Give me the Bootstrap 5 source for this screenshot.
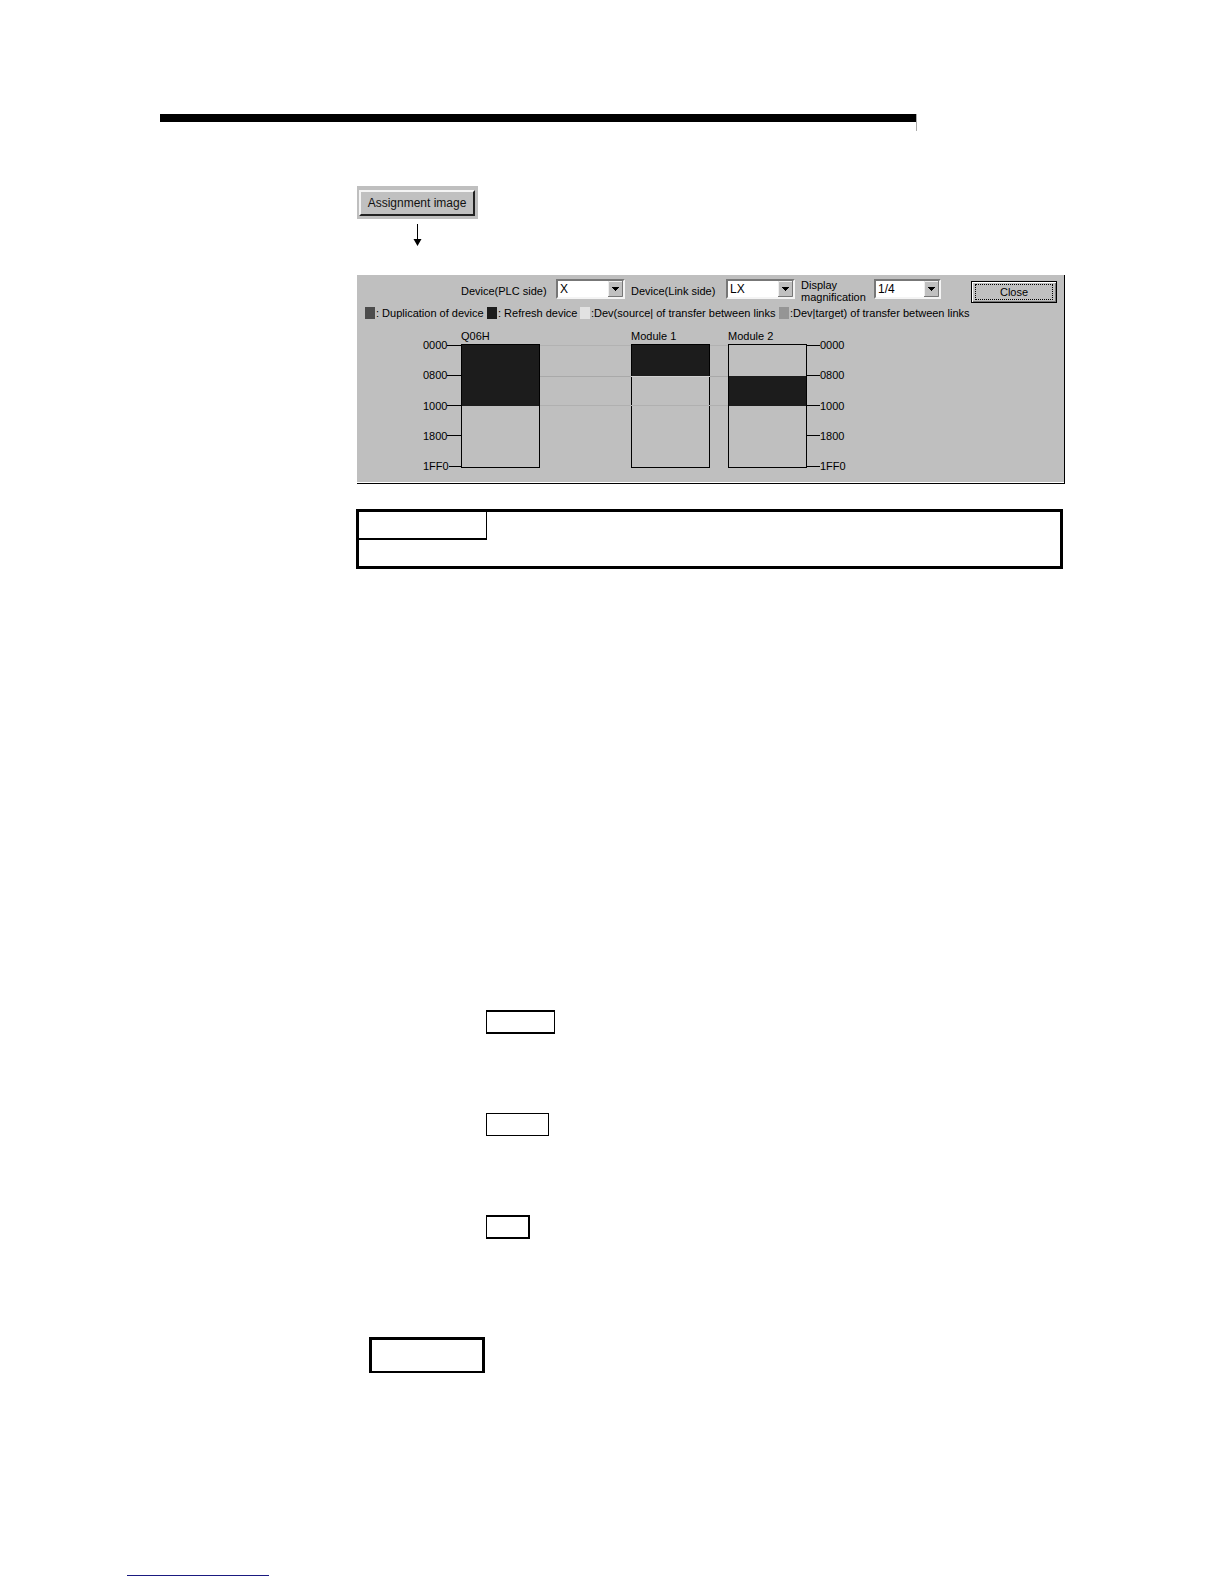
<!DOCTYPE html>
<html lang="en">
<head>
<meta charset="utf-8">
<meta name="viewport" content="width=device-width, initial-scale=1">
<title>Assignment image</title>
<link href="https://cdn.jsdelivr.net/npm/bootstrap@5.3.0/dist/css/bootstrap.min.css" rel="stylesheet">
<style>
  body { font: 11px/12px "Liberation Sans", Arial, sans-serif; color: #000; background: #fff; }
  .page-head { margin: 0 307px 55px 160px; padding-top: 114px; }
  .head-rule { height: 17px; border-right: 1px solid #aaa; }
  .head-rule div { height: 8px; background: #000; }
  .sheet { padding: 0 159px 0 357px; }

  .btn-plate { background: #bfbfbf; padding: 4px 3px 3px 2px; width: 121px; }
  .classic-btn { display: block; width: 100%; padding: 0; border-radius: 0; background: #c0c0c0; color: #111;
    border: 2px solid; border-color: #f4f4f4 #222 #222 #f4f4f4; font-size: 12px; line-height: 22px; text-align: center; }
  .arrow-row { width: 121px; height: 56px; padding-top: 5px; }

  .dialog-pane { background: #bfbfbf; border-right: 1px solid #000; border-bottom: 1px solid #000; box-shadow: inset 0 -1px #fff; height: 209px; }
  .tools { padding: 4px 7px 0 104px; height: 32px; }
  .tools label { width: 95px; padding-top: 6px; white-space: nowrap; }
  .tools .two-line { width: 73px; padding-top: 0; }
  .pick { width: 69px; height: 20px; margin-right: 6px; }
  .pick-s { width: 67px; }
  .pick select { appearance: none; width: 100%; height: 20px; padding: 0 0 0 2px; border: 2px solid; border-color: #777 #f4f4f4 #f4f4f4 #777;
    border-radius: 0; background: #fff; color: #000; font-size: 12px; line-height: 16px; }
  .pick svg { top: 2px; right: 2px; pointer-events: none; }
  .close-btn { width: 86px; height: 22px; margin-top: 2px; padding: 2px; border: 1px solid #000; border-radius: 0; background: #c0c0c0;
    box-shadow: inset 1px 1px #fff, inset -1px -1px #777; color: #000; font-size: 11px; line-height: 14px; }
  .close-btn span { display: block; border: 1px dotted #000; margin: 0 1px; }

  .legend-row { padding: 0 8px; height: 12px; white-space: nowrap; }
  .swatch { width: 10px; height: 12px; margin-right: 1px; flex: none; }
  .c-dup { background: #4c4c4c; } .c-ref { background: #1c1c1c; } .c-src { background: #e2e2e2; } .c-tgt { background: #959595; }
  .w-a { width: 122px; } .w-b { width: 93px; } .w-c { width: 199px; }

  .plot { padding: 12px 0 0 66px; }
  .scale { margin: 8px 0 0; width: 38px; height: 133px; padding: 0; list-style: none; }
  .scale li { height: 12px; }
  .scale li::after { content: ""; flex: 1; height: 1px; background: #000; }
  .scale.end li { flex-direction: row-reverse; justify-content: flex-end; }
  .scale.end li::after { flex: 0 0 13px; }
  .unit { width: 79px; }
  .unit h2 { font-size: 11px; line-height: 12px; margin: -1px 0 2px; font-weight: 400; white-space: nowrap; }
  .mem { height: 124px; border: 1px solid #000; }
  .fill { background: #1c1c1c; }
  .h-one { height: 31px; } .h-two { height: 61px; } .h-low { height: 30px; }
  .mem .cut { height: 30px; margin: 0 -1px; border-top: 1px solid #d0d0d0; border-bottom: 1px solid #b0b0b0; }
  .guides { padding-top: 14px; }
  .guides div { border-top: 1px solid #b2b2b2; height: 31px; }
  .guides .strong { border-top: 1px solid #a9a9a9; border-bottom: 1px solid #b0b0b0; height: 30px; }
  .g-wide { width: 91px; } .g-slim { width: 18px; }

  .note-box { margin: 25px 2px 0 -1px; border: 3px solid #000; height: 60px; }
  .note-tab { width: 128px; height: 28px; border-right: 1px solid #000; border-bottom: 2px solid #000; }
  .keys { margin: 441px 0 0 129px; gap: 79px; }
  .key { border: 1px solid #000; height: 24px; }
  .key-a { width: 69px; border-width: 2px 1px; }
  .key-b { width: 63px; height: 23px; }
  .key-c { width: 44px; border-width: 2px 2px 2px 1px; }
  .remark { margin: 98px 0 0 12px; width: 116px; height: 36px; border: 3px solid #000; border-bottom-width: 2px; }
  .page-foot { margin: 190px 0 0 127px; }
  .page-foot a { display: block; width: 142px; height: 13px; border-bottom: 1px solid #1a1a80; }
</style>
<script src="https://cdn.jsdelivr.net/npm/bootstrap@5.3.0/dist/js/bootstrap.bundle.min.js"></script>
</head>
<body>
<header class="page-head"><div class="head-rule"><div></div></div></header>

<main class="sheet">
  <div class="btn-plate"><button type="button" class="classic-btn">Assignment image</button></div>
  <div class="arrow-row d-flex justify-content-center">
    <svg width="9" height="22" viewBox="0 0 9 22" aria-hidden="true"><path d="M4 0h1v15h3.500L4.500 22 .500 15H4z"/></svg>
  </div>

  <section class="dialog-pane">
    <form class="tools d-flex align-items-start">
      <label for="plc">Device(PLC side)</label>
      <div class="pick position-relative">
        <select id="plc"><option>X</option></select>
        <svg class="position-absolute" width="15" height="16" viewBox="0 0 15 16"><path fill="#c0c0c0" d="M0 0h15v16H0z"/><path fill="none" stroke="#777" d="M0 15.500h14.500V0"/><path fill="none" stroke="#eee" d="M.500 15V.500H14"/><path d="M4 6h7v1h-1v1H9v1H8v1H7V9H6V8H5V7H4z"/></svg>
      </div>
      <label for="lnk">Device(Link side)</label>
      <div class="pick position-relative">
        <select id="lnk"><option>LX</option></select>
        <svg class="position-absolute" width="15" height="16" viewBox="0 0 15 16"><path fill="#c0c0c0" d="M0 0h15v16H0z"/><path fill="none" stroke="#777" d="M0 15.500h14.500V0"/><path fill="none" stroke="#eee" d="M.500 15V.500H14"/><path d="M4 6h7v1h-1v1H9v1H8v1H7V9H6V8H5V7H4z"/></svg>
      </div>
      <label class="two-line" for="mag">Display<br>magnification</label>
      <div class="pick pick-s position-relative">
        <select id="mag"><option>1/4</option></select>
        <svg class="position-absolute" width="15" height="16" viewBox="0 0 15 16"><path fill="#c0c0c0" d="M0 0h15v16H0z"/><path fill="none" stroke="#777" d="M0 15.500h14.500V0"/><path fill="none" stroke="#eee" d="M.500 15V.500H14"/><path d="M4 6h7v1h-1v1H9v1H8v1H7V9H6V8H5V7H4z"/></svg>
      </div>
      <button type="button" class="close-btn ms-auto"><span>Close</span></button>
    </form>

    <div class="legend-row d-flex">
      <div class="w-a d-flex"><i class="swatch c-dup"></i>: Duplication of device</div>
      <div class="w-b d-flex"><i class="swatch c-ref"></i>: Refresh device</div>
      <div class="w-c d-flex"><i class="swatch c-src"></i>:Dev(source| of transfer between links</div>
      <div class="d-flex"><i class="swatch c-tgt"></i>:Dev|target) of transfer between links</div>
    </div>

    <div class="plot d-flex">
      <ul class="scale d-flex flex-column justify-content-between">
        <li class="d-flex align-items-center">0000</li><li class="d-flex align-items-center">0800</li><li class="d-flex align-items-center">1000</li><li class="d-flex align-items-center">1800</li><li class="d-flex align-items-center">1FF0</li>
      </ul>
      <div class="unit"><h2>Q06H</h2><div class="mem"><div class="fill h-two"></div></div></div>
      <div class="guides g-wide"><div></div><div class="strong"></div></div>
      <div class="unit"><h2>Module 1</h2><div class="mem"><div class="fill h-one"></div><div class="cut"></div></div></div>
      <div class="guides g-slim"><div></div><div class="strong"></div></div>
      <div class="unit"><h2>Module 2</h2><div class="mem"><div class="h-one"></div><div class="fill h-low"></div></div></div>
      <ul class="scale end d-flex flex-column justify-content-between">
        <li class="d-flex align-items-center">0000</li><li class="d-flex align-items-center">0800</li><li class="d-flex align-items-center">1000</li><li class="d-flex align-items-center">1800</li><li class="d-flex align-items-center">1FF0</li>
      </ul>
    </div>
  </section>

  <div class="note-box"><div class="note-tab"></div></div>

  <div class="keys d-flex flex-column">
    <div class="key key-a"></div>
    <div class="key key-b"></div>
    <div class="key key-c"></div>
  </div>
  <div class="remark"></div>
</main>

<footer class="page-foot"><a href="#top" aria-label="Top of page"></a></footer>
</body>
</html>
